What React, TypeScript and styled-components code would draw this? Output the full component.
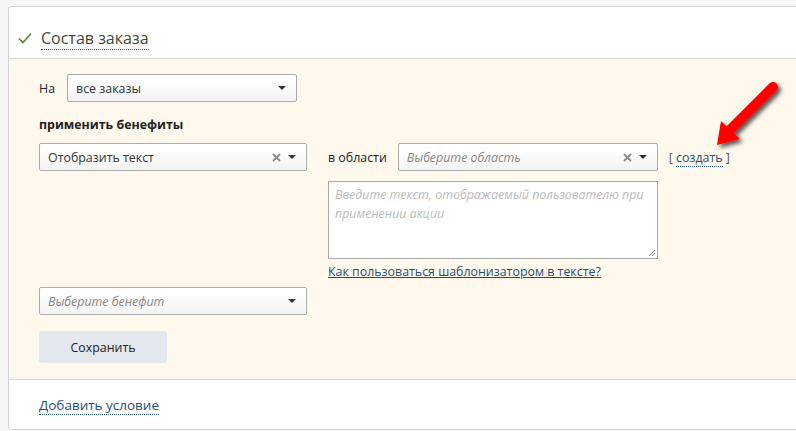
import React from 'react';
import styled, { createGlobalStyle } from 'styled-components';

const GlobalStyle = createGlobalStyle`
  html, body {
    margin: 0;
    padding: 0;
    background: #f6f6f6;
    overflow: hidden;
  }
  body {
    font-family: 'Open Sans', 'Noto Sans', sans-serif;
    font-size: 12.4px;
    color: #333;
  }
`;

const Page = styled.div`
  position: relative;
  width: 796px;
  height: 431px;
  padding: 6px 0 0 8px;
  box-sizing: border-box;
`;

const Panel = styled.div`
  width: 820px;
  background: #fff;
  border: 1px solid #d4d4d4;
  border-radius: 3px;
`;

const Header = styled.div`
  height: 52px;
  display: flex;
  align-items: flex-end;
  padding: 0 0 8px 9px;
  box-sizing: border-box;
  border-bottom: 1px solid #d8d8d8;
`;

const Check = styled.svg`
  width: 14px;
  height: 12px;
  margin-right: 9px;
  margin-bottom: 6px;
`;

const Title = styled.span`
  font-size: 16px;
  color: #3f4a33;
  border-bottom: 1px dotted #555;
  line-height: 22px;
`;

const Body = styled.div`
  background: #fff8ec;
  padding: 15px 30px 16px 30px;
  border-bottom: 1px solid #d8d8d8;
  display: flex;
  flex-direction: column;
  align-items: flex-start;
`;

const Row = styled.div`
  display: flex;
  align-items: center;
`;

const Label = styled.span<{ $bold?: boolean }>`
  font-weight: ${p => (p.$bold ? 700 : 400)};
  color: #222;
`;

const OnLabel = styled(Label)`
  margin-right: 12px;
`;

const SelectBox = styled.div<{ $width: number }>`
  width: ${p => p.$width}px;
  height: 28px;
  box-sizing: border-box;
  border: 1px solid #aaa;
  border-radius: 2px;
  background: linear-gradient(#ffffff 20%, #f3f3f3 100%);
  display: flex;
  align-items: center;
  padding: 0 10px 0 8px;
`;

const SelectText = styled.span<{ $placeholder?: boolean }>`
  flex: 1;
  font-style: ${p => (p.$placeholder ? 'italic' : 'normal')};
  color: ${p => (p.$placeholder ? '#888' : '#333')};
`;

const Clear = styled.svg`
  width: 9px;
  height: 9px;
  margin-right: 7px;
`;

const Caret = styled.span`
  width: 0;
  height: 0;
  border-left: 4px solid transparent;
  border-right: 4px solid transparent;
  border-top: 4px solid #333;
`;

const Section = styled.div<{ $gap: number }>`
  margin-top: ${p => p.$gap}px;
`;

const BenefitRow = styled.div`
  display: flex;
  align-items: flex-start;
  margin-top: 10px;
`;

const RightCol = styled.div`
  margin-left: 21px;
  display: flex;
  flex-direction: column;
`;

const AreaLabel = styled(Label)`
  margin-right: 11px;
`;

const Create = styled.span`
  margin-left: 11px;
  color: #555;
`;

const DottedLink = styled.span`
  color: #1f4e79;
  border-bottom: 1px dotted #1f4e79;
`;

const TextArea = styled.div`
  margin-top: 10px;
  width: 330px;
  height: 78px;
  box-sizing: border-box;
  border: 1px solid #aaa;
  background: #fff;
  padding: 3px 6px;
  position: relative;
  font-style: italic;
  color: #bbb;
  line-height: 19px;
`;

const Grip = styled.svg`
  position: absolute;
  right: 1px;
  bottom: 1px;
  width: 8px;
  height: 8px;
`;

const HelpLink = styled.a`
  margin-top: 4px;
  color: #1f4e79;
  text-decoration: underline;
  line-height: 18px;
`;

const SaveButton = styled.button`
  margin-top: 16px;
  width: 128px;
  height: 32px;
  border: none;
  border-radius: 3px;
  background: #e2e8ee;
  font-family: inherit;
  font-size: 12.4px;
  color: #222;
`;

const Footer = styled.div`
  height: 49px;
  display: flex;
  align-items: center;
  padding: 2px 0 0 30px;
  box-sizing: border-box;
  font-size: 13.5px;
`;

const Arrow = styled.svg`
  position: absolute;
  left: 700px;
  top: 70px;
  width: 96px;
  height: 90px;
`;

type SelectProps = {
  width: number;
  text: string;
  placeholder?: boolean;
  clearable?: boolean;
};

const Select = ({ width, text, placeholder, clearable }: SelectProps) => (
  <SelectBox $width={width}>
    <SelectText $placeholder={placeholder}>{text}</SelectText>
    {clearable && (
      <Clear viewBox="0 0 9 9">
        <path d="M1 1 L8 8 M8 1 L1 8" stroke="#8a8a8a" strokeWidth="1.8" />
      </Clear>
    )}
    <Caret />
  </SelectBox>
);

export default function App() {
  return (
    <Page>
      <GlobalStyle />
      <Panel>
        <Header>
          <Check viewBox="0 0 14 12">
            <path d="M1 6.5 L5 10.5 L13 1.5" fill="none" stroke="#5b8a2e" strokeWidth="1.6" />
          </Check>
          <Title>Состав заказа</Title>
        </Header>
        <Body>
          <Row>
            <OnLabel>На</OnLabel>
            <Select width={230} text="все заказы" />
          </Row>
          <Section $gap={14}>
            <Label $bold>применить бенефиты</Label>
          </Section>
          <BenefitRow>
            <Select width={268} text="Отобразить текст" clearable />
            <RightCol>
              <Row>
                <AreaLabel>в области</AreaLabel>
                <Select width={260} text="Выберите область" placeholder clearable />
                <Create>
                  [ <DottedLink>создать</DottedLink> ]
                </Create>
              </Row>
              <TextArea>
                Введите текст, отображаемый пользователю при применении акции
                <Grip viewBox="0 0 8 8">
                  <path d="M7 1 L1 7 M7 4 L4 7" stroke="#777" strokeWidth="1" />
                </Grip>
              </TextArea>
              <HelpLink>Как пользоваться шаблонизатором в тексте?</HelpLink>
            </RightCol>
          </BenefitRow>
          <Section $gap={6}>
            <Select width={268} text="Выберите бенефит" placeholder />
          </Section>
          <SaveButton>Сохранить</SaveButton>
        </Body>
        <Footer>
          <DottedLink>Добавить условие</DottedLink>
        </Footer>
      </Panel>
      <Arrow viewBox="0 0 96 90">
        <defs>
          <filter id="sh" x="-30%" y="-30%" width="160%" height="160%">
            <feDropShadow dx="3" dy="3" stdDeviation="2" floodColor="#000" floodOpacity="0.65" />
          </filter>
        </defs>
        <g filter="url(#sh)">
          <line x1="73" y1="17" x2="30" y2="60" stroke="#f00" strokeWidth="10" strokeLinecap="round" />
          <polygon points="17,75 21,51 40,69" fill="#f00" />
        </g>
      </Arrow>
    </Page>
  );
}
